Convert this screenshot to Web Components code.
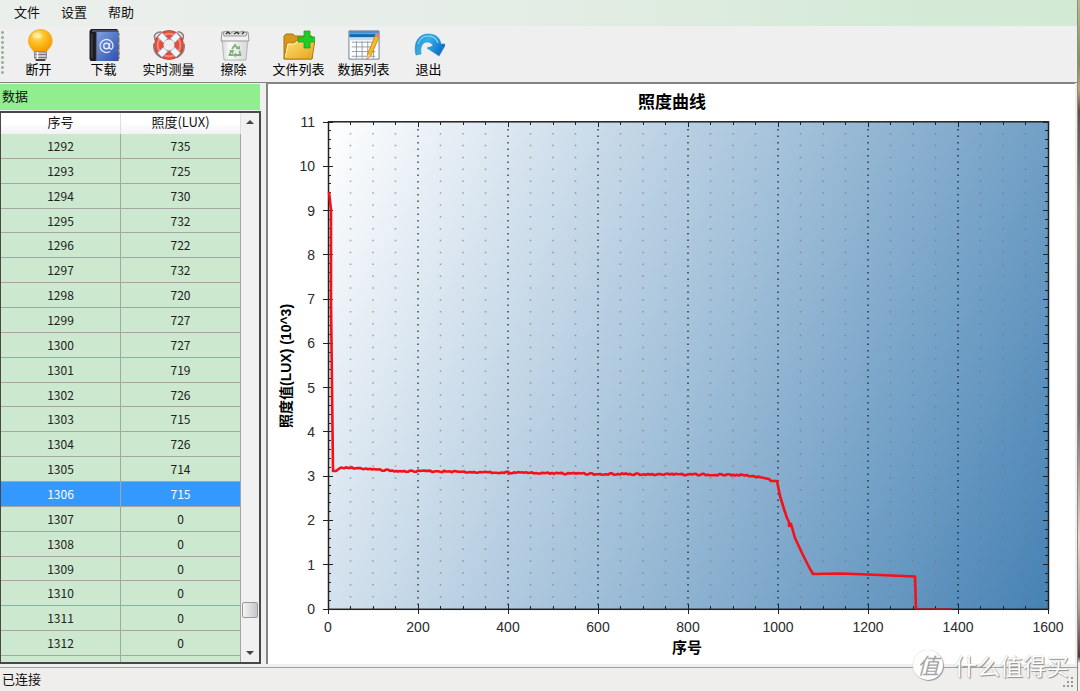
<!DOCTYPE html>
<html lang="zh-CN">
<head>
<meta charset="utf-8">
<meta name="viewport" content="width=device-width, initial-scale=1">
<title>照度曲线</title>
<style>
  html, body { height: 100%; margin: 0; }
  body {
    font: 13px/20px "Noto Sans CJK SC", sans-serif;
    color: #111;
    background: linear-gradient(#b9bd83 0, #7d9455 9%, #b8a869 13%, #5d5048 16%, #8a8178 30%, #777069 60%, #e9d5c8 78%, #b59c92 88%, #4b3a36 95%, #efefe4 96%);
  }
</style>
</head>
<body>
<app-window></app-window>

<script>
class BaseElement extends HTMLElement {
  constructor() {
    super();
    this.attachShadow({ mode: 'open' }).innerHTML = this.constructor.markup;
  }
}

class MenuBar extends BaseElement {
  static markup = `
    <style>
      :host { display: block; height: 26px; background: linear-gradient(90deg, #ebefec, #e5ede7 45%, #d4ead6 85%, #d2e9d4); }
      nav { display: flex; gap: 21px; padding: 2px 14px; }
    </style>
    <nav aria-label="菜单"><slot></slot></nav>`;
}
customElements.define('menu-bar', MenuBar);

class MenuItem extends BaseElement {
  static markup = `
    <style>
      :host { display: block; }
      button { border: 0; padding: 0; background: none; color: inherit; font: inherit; }
    </style>
    <button type="button"><slot></slot></button>`;
}
customElements.define('menu-item', MenuItem);

class ToolBar extends BaseElement {
  static markup = `
    <style>
      :host { display: flex; height: 56px; background: #efefef; }
      .grip { width: 3px; height: 46px; margin: 4px 2px 0 1px; background: radial-gradient(circle, #9db39d 1px, transparent 2px) 0 0 / 3px 5px; }
    </style>
    <div class="grip"></div><slot></slot>`;
}
customElements.define('tool-bar', ToolBar);

class ToolButton extends BaseElement {
  static markup = `
    <style>
      :host { display: block; width: 65px; }
      button { display: flex; flex-direction: column; align-items: center; width: 100%; border: 0; padding: 3px 0 0; background: none; color: #000; font: inherit; line-height: 16px; white-space: nowrap; }
      ::slotted(svg) { display: block; width: 32px; height: 32px; }
    </style>
    <button type="button"><slot name="icon"></slot><span><slot></slot></span></button>`;
}
customElements.define('tool-button', ToolButton);

class ScrollBar extends BaseElement {
  static markup = `
    <style>
      :host { display: flex; flex-direction: column; width: 18px; background: #f1f1f1; align-items: center; }
      svg { width: 8px; height: 4px; margin: 7px 0; }
      .before { flex: 476; }
      .thumb { width: 14px; height: 14px; border: 1px solid #999; border-radius: 2px; background: linear-gradient(90deg, #f5f5f5, #c6c6ca); }
      .after { flex: 26; }
    </style>
    <svg viewBox="0 0 8 4"><path d="M0 4 4 0 8 4z" fill="#444"/></svg>
    <div class="before"></div><div class="thumb"></div><div class="after"></div>
    <svg viewBox="0 0 8 4"><path d="M0 0 4 4 8 0z" fill="#444"/></svg>`;
}
customElements.define('scroll-bar', ScrollBar);

class DataGrid extends BaseElement {
  static markup = `
    <style>
      :host { display: flex; flex-direction: column; min-height: 0; }
      h2 { flex: none; margin: 0 1px 1px 0; padding: 2px 2px 4px; font: inherit; background: #90ee90; }
      .frame { display: flex; flex: 1; min-height: 0; border: solid #484848; border-width: 2px 2px 2px 1px; }
      .view { flex: 1; overflow: hidden; }
      table { width: 100%; height: 568px; table-layout: fixed; border-collapse: separate; border-spacing: 0; }
      th, td { padding: 0; text-align: center; box-sizing: border-box; }
      th { height: 21px; font-weight: 400; line-height: 18px; vertical-align: top; border-right: 1px solid #dcdee0; background: linear-gradient(#fff 45%, #f1f2f4); }
      td { height: 24px; font-size: 12px; line-height: 16px; color: #222; background: #cce8cf; border: solid #a4a6a4; border-width: 0 1px 1px 0; }
      .selected td { color: #fff; background: #3399ff; }
    </style>
    <h2>数据</h2>
    <div class="frame">
      <div class="view"><table>
        <thead><tr><th scope="col">序号</th><th scope="col">照度(LUX)</th></tr></thead>
        <tbody></tbody>
      </table></div>
      <scroll-bar></scroll-bar>
    </div>`;
  connectedCallback() {
    const first = 1292, selected = 1306;
    const values = [735, 725, 730, 732, 722, 732, 720, 727, 727, 719, 726, 715, 726, 714, 715, 0, 0, 0, 0, 0, 0];
    this.shadowRoot.querySelector('tbody').innerHTML = values.map((v, i) =>
      `<tr${first + i === selected ? ' class="selected"' : ''}><td>${first + i}</td><td>${v}</td></tr>`
    ).join('') + '<tr><td></td><td></td></tr>';
  }
}
customElements.define('data-grid', DataGrid);

class LineChart extends BaseElement {
  static markup = `
    <style>
      :host { display: block; background: #fff; min-width: 0; min-height: 0; }
      svg { display: block; width: 100%; height: 100%; }
      text { text-anchor: middle; fill: #000; font-family: "Liberation Sans", "Noto Sans CJK SC", sans-serif; }
      .tick text { font-size: 14px; fill: #2b2b2b; }
      .ytick text { text-anchor: end; }
      .title { font-size: 17px; font-weight: 700; }
      .xname { font-size: 15px; font-weight: 700; }
      .yname { font-size: 14px; font-weight: 700; }
      .axis { stroke: #222; fill: none; }
      #ticks { shape-rendering: crispEdges; }
      .major { stroke: #000; stroke-opacity: .7; stroke-width: 1.5; stroke-dasharray: 1.5 5; }
      .minor { stroke: #777; stroke-opacity: .65; stroke-width: 1.5; stroke-dasharray: 1.5 10.37; }
      .curve { fill: none; stroke: #f5101a; stroke-width: 2.6; stroke-linejoin: round; }
    </style>
    <svg viewBox="0 0 807 580" role="img" aria-label="照度曲线">
      <defs><linearGradient id="bg" gradientUnits="userSpaceOnUse" x1="0" y1="0" x2="779" y2="358">
        <stop offset="0" stop-color="#fff"/><stop offset="1" stop-color="#4682b4"/></linearGradient></defs>
      <text class="title" x="404" y="24">照度曲线</text>
      <text class="xname" x="419" y="569">序号</text>
      <text class="yname" transform="translate(23 282) rotate(-90)">照度值(LUX) (10^3)</text>
      <g transform="translate(60 38)">
        <rect width="720" height="487" fill="url(#bg)"/>
        <g id="grid"></g>
        <rect class="axis" x=".5" y="-.2" width="720" height="487.500" stroke-width="1.5"/>
        <path id="ticks" class="axis"/>
        <g id="labels"></g>
        <path id="curve" class="curve"/>
        <path d="M588 487H624" stroke="#b01828" stroke-width="1.5"/>
      </g>
    </svg>`;
  connectedCallback() {
    const W = 720, H = 487, $ = id => this.shadowRoot.getElementById(id);
    let grid = '', ticks = '', labels = '';
    for (let v = 0; v <= 1600; v += 50) {
      const x = v * W / 1600, major = v % 200 === 0;
      if (v > 0 && v < 1600) grid += major
        ? `<path class="major" d="M${x} 7V${H}"/>` : `<path class="minor" d="M${x} 11V${H}"/>`;
      ticks += major ? `M${x} 0v5M${x} ${H - 5}v10` : `M${x} 0v3M${x} ${H}v-3`;
      if (major) labels += `<g class="tick"><text x="${x}" y="${H + 23}">${v}</text></g>`;
    }
    for (let i = 0; i <= 55; i++) {
      const y = H - i * H / 55, major = i % 5 === 0;
      ticks += major ? `M-5 ${y}h10M${W} ${y}h-5` : `M0 ${y}h3M${W} ${y}h-3`;
      if (major) labels += `<g class="tick ytick"><text x="-13" y="${y + 5}">${i / 5}</text></g>`;
    }
    $('grid').innerHTML = grid;
    $('labels').innerHTML = labels;
    $('ticks').setAttribute('d', ticks);

    const points = [[1, 70], [3, 88], [3, 180], [5, 349], [8, 349], [12, 346], [20, 346], [32, 346], [44, 347.5], [72, 349], [120, 349.5], [200, 351],
      [272, 352], [360, 352.5], [415, 353], [425, 354], [436, 356], [441, 357], [443, 359], [449, 359], [452, 374], [456, 387], [459, 396], [461, 400], [461, 404], [463, 402],
      [467, 416], [474, 431], [481, 445], [485, 452], [512, 451.5], [540, 452.5], [587, 454.5], [588, 487]];
    let d = `M${points[0]}`;
    for (let k = 1; k < points.length; k++) {
      const [x0, y0] = points[k - 1], [x1, y1] = points[k];
      const steps = x1 - x0 > 5 && x1 < 445 ? Math.round((x1 - x0) / 2) : 1;
      for (let s = 1; s <= steps; s++) {
        const t = s / steps, noise = s < steps ? Math.sin((k * 31 + s * s) * 1.7) * 0.7 : 0;
        d += `L${(x0 + (x1 - x0) * t).toFixed(1)} ${(y0 + (y1 - y0) * t + noise).toFixed(1)}`;
      }
    }
    $('curve').setAttribute('d', d);
  }
}
customElements.define('line-chart', LineChart);

class StatusBar extends BaseElement {
  static markup = `
    <style>
      :host { display: flex; justify-content: space-between; align-items: flex-end; height: 23px; border-top: 1px solid #a2a2a2; background: #f0eded; }
      span { align-self: flex-start; padding: 1px 2px; }
      svg { width: 12px; height: 12px; margin: 0 3px 3px 0; }
    </style>
    <span role="status"><slot></slot></span>
    <svg viewBox="0 0 12 12" fill="#999"><path d="M9 1h2v2H9zM5 5h2v2H5zM9 5h2v2H9zM1 9h2v2H1zM5 9h2v2H5zM9 9h2v2H9z"/></svg>`;
}
customElements.define('status-bar', StatusBar);

class SiteMark extends BaseElement {
  static markup = `
    <style>
      :host { display: flex; align-items: center; gap: 11px; color: #fff; font-size: 23px; line-height: 30px; text-shadow: 1px 1px 1px #8c8c8c, 0 0 1px #aaa; pointer-events: none; }
      .seal { width: 30px; height: 30px; border-radius: 50%; background: #fff; color: #a5a5a5; text-align: center; font-size: 22px; line-height: 28px; font-style: italic; text-shadow: none; box-shadow: 1px 1px 1px #999, 0 0 1px #bbb; }
    </style>
    <span class="seal">值</span><span>什么值得买</span>`;
}
customElements.define('site-mark', SiteMark);

class AppWindow extends BaseElement {
  static markup = `
    <style>
      :host { display: flex; flex-direction: column; position: relative; height: 100vh; margin-right: 2px; border-right: 1px solid #8b8b8b; box-sizing: border-box; background: #efefef; overflow: hidden; }
      menu-bar, tool-bar, status-bar { flex: none; }
      main { display: flex; flex: 1; gap: 5px; min-height: 0; padding-right: 2px; border-top: 1px solid #858585; }
      data-grid { width: 261px; flex: none; padding-top: 1px; box-sizing: border-box; }
      line-chart { flex: 1; border: solid #858585; border-width: 1px 0 0 2px; }
      .edge { height: 3px; flex: none; }
      site-mark { position: absolute; right: 8px; bottom: 11px; }
    </style>
    <menu-bar><menu-item>文件</menu-item><menu-item>设置</menu-item><menu-item>帮助</menu-item></menu-bar>
    <tool-bar>
      <tool-button>断开
        <svg slot="icon" viewBox="0 0 32 32"><defs><radialGradient id="bulb" cx=".4" cy=".3" r=".7"><stop offset="0" stop-color="#ffe681"/><stop offset=".45" stop-color="#ffbf22"/><stop offset="1" stop-color="#f39a00"/></radialGradient></defs>
          <path d="M17.500 .5C10.500 .5 5.500 5.500 5.500 12c0 5 3 7 5.800 11h12c2.600-4 5.900-6 5.900-11C29.200 5.500 24.500.5 17.500.5z" fill="url(#bulb)" stroke="#f0a010" stroke-width=".6"/>
          <ellipse cx="14" cy="6.500" rx="4.500" ry="3" fill="#fff" opacity=".4"/>
          <path d="M11.500 23h12v6l-2 3h-8l-2-3z" fill="#c9c9c9" stroke="#777" stroke-width=".8"/><path d="M12 25.500h11M12 28.500h11" stroke="#777" stroke-width="1"/><path d="M14.500 23v8" stroke="#fff" stroke-width="1.500"/><path d="M13 31h9" stroke="#444" stroke-width="2"/></svg>
      </tool-button>
      <tool-button>下载
        <svg slot="icon" viewBox="0 0 32 32"><defs><linearGradient id="book" x2="1" y2="1"><stop offset="0" stop-color="#7d9fe2"/><stop offset="1" stop-color="#2e50ab"/></linearGradient></defs>
          <path d="M29 5h3v5h-3M29 12h3v5h-3M29 19h3v5h-3M29 25h3v4h-3" fill="#f5f5f5" stroke="#888"/>
          <path d="M3 0h26l1.500 2v30H2.500l-1-2V2z" fill="#1b1b20"/><path d="M9 3h21v29H9z" fill="url(#book)"/><path d="M4 2h26" stroke="#7488bb"/><path d="M8.500 3v29" stroke="#5a6275" stroke-width="1.200"/><path d="M4 5v24" stroke="#555"/>
          <circle cx="18.500" cy="17" r="2.800" fill="none" stroke="#e3ecff" stroke-width="1.400"/><path d="M21.500 14v5c1 2 3.500 1 3.500-2a6.500 6.500 0 1 0-3 5.500" fill="none" stroke="#e3ecff" stroke-width="1.300"/></svg>
      </tool-button>
      <tool-button>实时测量
        <svg slot="icon" viewBox="0 0 34 33"><path d="M3 12C-1 5 4 3 9 2.500M26 2.500c5 0 8 4 5 9M1 15c-1 7 2 12 8 15M33 15c1 7-2 12-8 15" fill="none" stroke="#858585" stroke-width="1.700"/>
          <circle cx="17" cy="16.500" r="10.800" fill="none" stroke="#a83022" stroke-width="9.600"/><circle cx="17" cy="16.500" r="10.800" fill="none" stroke="#e34f3a" stroke-width="8.500"/><circle cx="17" cy="16.500" r="12" fill="none" stroke="#f08a76" stroke-width="2"/>
          <path d="M5 8 9.500 3.500l6 6-4.500 4.500zM24.500 3.500 29 8l-6 6-4.500-4.500zM5 25l6-6 4.500 4.500-6 6zM18.500 23.500 23 19l6 6-4.500 4.500z" fill="#edf6fc" stroke="#9bc4e0" stroke-width=".8"/></svg>
      </tool-button>
      <tool-button>擦除
        <svg slot="icon" viewBox="0 0 32 32"><defs><linearGradient id="bin"><stop offset="0" stop-color="#d8d8d8"/><stop offset=".3" stop-color="#fafafa"/><stop offset="1" stop-color="#d6d6d6"/></linearGradient></defs>
          <path d="M4 11h26l-2 20H6z" fill="url(#bin)" stroke="#aaa" stroke-width=".8"/><path d="M4 3h26l1 9H3z" fill="#f1f1f1" stroke="#999"/><path d="M5 3.500 9 2l3 3 4-3 4 3 4-3 5 2-1 3H6z" fill="#ddd" stroke="#888" stroke-width=".8"/><path d="m8 5 2-2 2 2M16 5l3-2 2 2M24 5l2-2" stroke="#333" stroke-width="1.300" fill="none"/>
          <path d="m14 20 3-4 3 4M21.500 22l1 4h-5M15.500 26h-4l2-5" fill="none" stroke="#7cb378" stroke-width="1.800"/><path d="m18 19.500 4 1v-4zM18 23.500v5L15 26zM11 21h5l-1 4z" fill="#7cb378"/></svg>
      </tool-button>
      <tool-button>文件列表
        <svg slot="icon" viewBox="0 0 32 32"><defs><linearGradient id="fold" x2="1" y2="1"><stop offset="0" stop-color="#ffe173"/><stop offset="1" stop-color="#e4a41e"/></linearGradient></defs>
          <path d="M1 30V7l2-2h7l2 2h17v23z" fill="#d79819" stroke="#a87412"/><path d="M4 14h7l3-3h18l-3 19H1z" fill="url(#fold)" stroke="#b47e10"/><path d="M2.500 28 5 15h7l3-3h15" fill="none" stroke="#fff0a2"/>
          <path d="M21 2h6v6h6v5h-6v6h-6v-6h-6V8h6z" fill="#20cc25" stroke="#119c14" stroke-width=".7"/></svg>
      </tool-button>
      <tool-button>数据列表
        <svg slot="icon" viewBox="0 0 34 32"><path d="M1 1h32v30H1z" fill="#fff" stroke="#667b94"/><path d="M1.500 1.500h31V8h-31z" fill="#1767ad"/><path d="M1.500 2.500h31v2h-31z" fill="#5ca5df"/><path d="M1.500 8h31v3h-31z" fill="#c7dcef"/><path d="M4 13h25M4 18h25M4 23h25M4 28h25M9 12v18M15 12v18M21 12v18M27 12v18" stroke="#909aa5"/>
          <path d="m20 31 1-6L29 6l4 2-9 20z" fill="#f6b926" stroke="#b67d12" stroke-width=".8"/><path d="m28.500 6 1.500-3 4 2-1.500 3z" fill="#e7848c"/><path d="m20 31 1-5 3 1z" fill="#e8cfa0"/></svg>
      </tool-button>
      <tool-button>退出
        <svg slot="icon" viewBox="0 0 32 32"><defs><linearGradient id="arrow" x2="1" y2=".4"><stop offset="0" stop-color="#1f7ecb"/><stop offset=".45" stop-color="#34b4e7"/><stop offset="1" stop-color="#126fc8"/></linearGradient></defs>
          <path d="M3 26C0 15 5 5 15 5c8 0 12 4 13 10h5l-7 12-12-8 6-2c-1-3-3-4-6-4-5 0-7 6-6 12z" fill="url(#arrow)" stroke="#2387c7" stroke-width=".6"/><path d="M5 15c2-6 5-8 10-8 6 0 9 4 10 7" stroke="#85d9f6" stroke-width="1.200" fill="none"/></svg>
      </tool-button>
    </tool-bar>
    <main><data-grid></data-grid><line-chart></line-chart></main>
    <div class="edge"></div>
    <status-bar>已连接</status-bar>
    <site-mark></site-mark>`;
}
customElements.define('app-window', AppWindow);
</script>
</body>
</html>
